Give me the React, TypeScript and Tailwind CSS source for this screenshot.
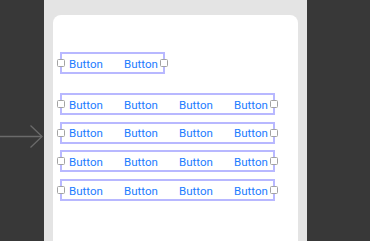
const font = { fontFamily: 'Roboto, "Liberation Sans", Arial, sans-serif' };

const Handle = ({ side }: { side: "left" | "right" }) => (
  <span
    className={`absolute top-1/2 -translate-y-1/2 w-[8px] h-[8px] rounded-[1.5px] border-[1.5px] border-[#a3a3a3] bg-white ${
      side === "left" ? "-left-[5px]" : "-right-[5px]"
    }`}
  />
);

const StackRow = ({ count }: { count: number }) => (
  <div
    className={`relative flex items-center h-[22px] border-2 border-[#b8b8ff] pl-[7px] ${
      count === 2 ? "w-[105px]" : "w-[215px]"
    }`}
  >
    <Handle side="left" />
    {Array.from({ length: count }).map((_, i) => (
      <span
        key={i}
        className={`text-[11.5px] leading-[14px] pt-[1px] text-[#1c7cff] whitespace-nowrap ${
          i < count - 1 ? "w-[55px] shrink-0" : ""
        }`}
        style={font}
      >
        Button
      </span>
    ))}
    <Handle side="right" />
  </div>
);

export default function App() {
  return (
    <div className="w-[370px] h-[241px] bg-[#383838] flex overflow-hidden">
      <div className="w-[44px] h-full flex flex-col pt-[125px]">
        <svg width="44" height="23" viewBox="0 0 44 23" fill="none">
          <path d="M0 11.5 H42" stroke="#6a6a6a" strokeWidth="1.3" />
          <path d="M30.5 0.5 L42 11.5 L30.5 22.5" stroke="#6a6a6a" strokeWidth="1.3" />
        </svg>
      </div>
      <div className="w-[263px] h-full bg-[#e4e4e4] pt-[15px] pl-[9px]">
        <div className="w-[245px] h-full bg-white rounded-t-[8px] pt-[37px] pl-[7px] flex flex-col">
          <StackRow count={2} />
          <div className="mt-[19px] flex flex-col gap-[6.7px]">
            <StackRow count={4} />
            <StackRow count={4} />
            <StackRow count={4} />
            <StackRow count={4} />
          </div>
        </div>
      </div>
    </div>
  );
}
